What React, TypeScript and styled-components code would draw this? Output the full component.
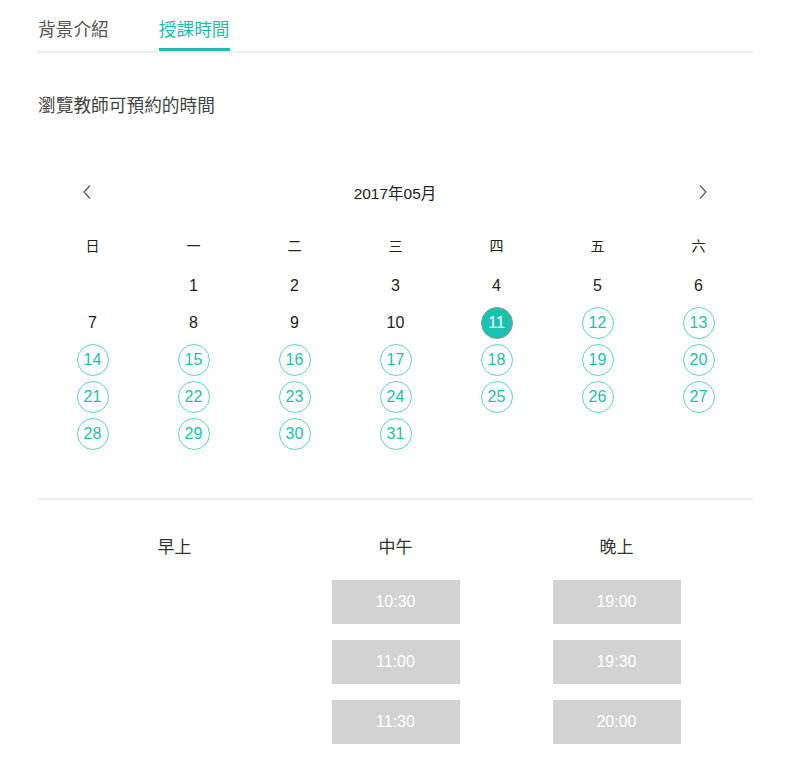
import React, { useState } from 'react';
import styled, { createGlobalStyle } from 'styled-components';

const GlobalStyle = createGlobalStyle`
    body {
        margin: 0;
        background: #fff;
        font-family: "Liberation Sans", "Noto Sans CJK TC", "Noto Sans CJK SC", sans-serif;
        color: #333;
    }
`;

const Teal = '#1dbfac';

const Page = styled.div`
    width: 715px;
    margin-left: 38px;
`;
const TabBar = styled.div`
    display: flex;
    gap: 50px;
    height: 51px;
    border-bottom: 2px solid #eeeeee;
`;
const Tab = styled.div<{ $active?: boolean }>`
    padding: 18px 0 8px;
    line-height: 24px;
    font-size: 17.7px;
    color: ${p => (p.$active ? Teal : '#555')};
    border-bottom: 3px solid ${p => (p.$active ? Teal : 'transparent')};
    cursor: pointer;
`;
const Heading = styled.h2`
    margin: 41px 0 0;
    font-size: 17.7px;
    font-weight: 400;
    line-height: 24px;
    color: #444;
`;
const CalHeader = styled.div`
    display: flex;
    align-items: center;
    justify-content: space-between;
    height: 28px;
    margin-top: 60px;
    padding: 0 45px 0 44px;
`;
const Arrow = styled.button`
    display: flex;
    padding: 0;
    border: none;
    background: none;
    cursor: pointer;
`;
const Title = styled.div`
    font-size: 15.5px;
    color: #222;
`;
const Grid = styled.div<{ $gap?: number }>`
    display: grid;
    grid-template-columns: repeat(7, 101px);
    grid-auto-rows: 37px;
    margin-left: 4px;
    margin-bottom: ${p => p.$gap ?? 0}px;
`;
const WeekGrid = styled(Grid)`
    margin-top: 20px;
`;
const Cell = styled.div`
    display: flex;
    align-items: center;
    justify-content: center;
    font-size: 14px;
    color: #222;
`;
const Day = styled.div<{ $open?: boolean; $selected?: boolean }>`
    box-sizing: border-box;
    width: 32px;
    height: 32px;
    display: flex;
    align-items: center;
    justify-content: center;
    border-radius: 50%;
    font-size: 16px;
    color: ${p => (p.$selected ? '#fff' : p.$open ? Teal : '#222')};
    background: ${p => (p.$selected ? '#17c2af' : 'transparent')};
    border: 1px solid ${p => (p.$selected ? '#9b9090' : p.$open ? '#5ed4c6' : 'transparent')};
    cursor: ${p => (p.$open ? 'pointer' : 'default')};
`;
const Divider = styled.hr`
    margin: 46px 0 0;
    border: none;
    border-top: 2px solid #f0f0f0;
`;
const Periods = styled.div`
    display: grid;
    grid-template-columns: repeat(3, 1fr);
    padding: 0 26px;
    margin-top: 36px;
`;
const Period = styled.div`
    display: flex;
    flex-direction: column;
    align-items: center;
    gap: 16px;
`;
const PeriodTitle = styled.div`
    font-size: 17px;
    line-height: 24px;
    color: #333;
    margin-bottom: 4px;
`;
const Slot = styled.div`
    width: 128px;
    height: 44px;
    display: flex;
    align-items: center;
    justify-content: center;
    background: #d3d3d3;
    color: #fff;
    font-size: 16px;
    cursor: pointer;
`;

const Chevron = ({ dir }: { dir: 'left' | 'right' }) => (
    <svg width="10" height="16" viewBox="0 0 10 16" fill="none" stroke="#555" strokeWidth="1.2">
        {dir === 'left' ? <path d="M8 1.5 L2 8 L8 14.5" /> : <path d="M2 1.5 L8 8 L2 14.5" />}
    </svg>
);

const weekdays = ['日', '一', '二', '三', '四', '五', '六'];
const periods = [
    { name: '早上', slots: [] as string[] },
    { name: '中午', slots: ['10:30', '11:00', '11:30'] },
    { name: '晚上', slots: ['19:00', '19:30', '20:00'] },
];

const App = () => {
    const [selected, setSelected] = useState(11);
    const offset = 1;
    const cells: (number | null)[] = [];
    for (let i = 0; i < offset; i++) cells.push(null);
    for (let d = 1; d <= 31; d++) cells.push(d);

    return (
        <Page>
            <GlobalStyle />
            <TabBar>
                <Tab>背景介紹</Tab>
                <Tab $active>授課時間</Tab>
            </TabBar>
            <Heading>瀏覽教師可預約的時間</Heading>
            <CalHeader>
                <Arrow><Chevron dir="left" /></Arrow>
                <Title>2017年05月</Title>
                <Arrow><Chevron dir="right" /></Arrow>
            </CalHeader>
            <WeekGrid $gap={4}>
                {weekdays.map(w => <Cell key={w}>{w}</Cell>)}
            </WeekGrid>
            <Grid>
                {cells.map((d, i) => (
                    <Cell key={i}>
                        {d && (
                            <Day
                                $open={d >= 11}
                                $selected={d === selected}
                                onClick={() => d >= 11 && setSelected(d)}
                            >
                                {d}
                            </Day>
                        )}
                    </Cell>
                ))}
            </Grid>
            <Divider />
            <Periods>
                {periods.map(p => (
                    <Period key={p.name}>
                        <PeriodTitle>{p.name}</PeriodTitle>
                        {p.slots.map(s => <Slot key={s}>{s}</Slot>)}
                    </Period>
                ))}
            </Periods>
        </Page>
    );
};

export default App;
